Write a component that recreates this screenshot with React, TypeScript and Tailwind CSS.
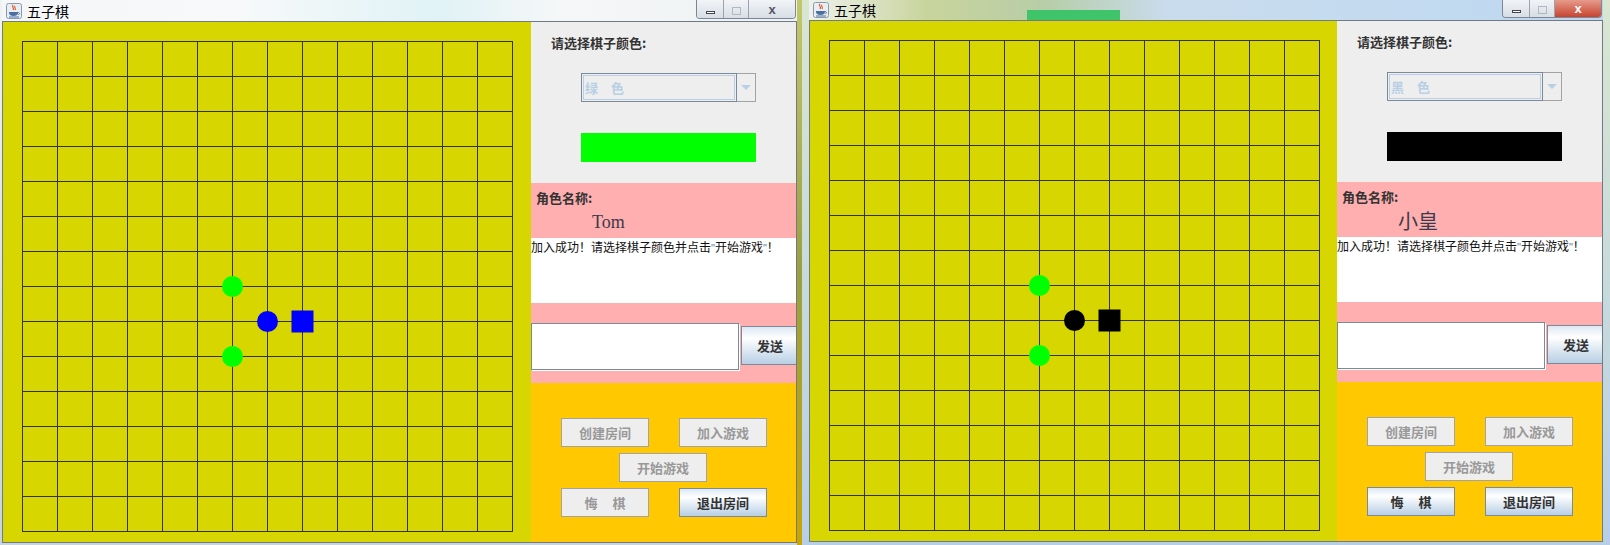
import React from 'react';

const CJK = "font-['Noto_Sans_CJK_SC','Noto_Sans',sans-serif]";

interface Piece {
  c: number;
  r: number;
  shape: 'circle' | 'square';
  color: string;
}

function Board({ width, stone }: { width: number; stone: string }) {
  const pos = Array.from({ length: 15 }, (_, i) => 19.5 + i * 35);
  const pieces: Piece[] = [
    { c: 6, r: 7, shape: 'circle', color: '#00ff00' },
    { c: 6, r: 9, shape: 'circle', color: '#00ff00' },
    { c: 7, r: 8, shape: 'circle', color: stone },
    { c: 8, r: 8, shape: 'square', color: stone },
  ];
  return (
    <div className="h-[520px] bg-[#d8d600] shrink-0" style={{ width }}>
      <svg width={width} height={520} className="block">
        {pos.map((v) => (
          <line key={'h' + v} x1={19} x2={510} y1={v} y2={v} stroke="#333333" strokeWidth={1} />
        ))}
        {pos.map((v) => (
          <line key={'v' + v} x1={v} x2={v} y1={19} y2={510} stroke="#333333" strokeWidth={1} />
        ))}
        {pieces.map((p, i) => {
          const cx = 19.5 + p.c * 35;
          const cy = 19.5 + p.r * 35;
          return p.shape === 'circle' ? (
            <circle key={i} cx={cx} cy={cy} r={10.5} fill={p.color} />
          ) : (
            <rect key={i} x={cx - 11} y={cy - 11} width={22} height={22} fill={p.color} />
          );
        })}
      </svg>
    </div>
  );
}

function Btn({ label, enabled, spaced }: { label: string; enabled: boolean; spaced?: boolean }) {
  const chars = spaced ? label.split('') : [label];
  return (
    <div
      className={`w-[88px] h-[29px] flex items-center justify-center gap-[15px] border text-[13px] font-bold ${CJK} ${
        enabled
          ? 'border-[#7a8a99] bg-[linear-gradient(to_bottom,#dde8f3,#ffffff_30%,#b8cfe5)] text-[#333333]'
          : 'border-[#a3a3a3] bg-[#eeeeee] text-[#999999]'
      }`}
    >
      {chars.map((ch, i) => (
        <span key={i}>{ch}</span>
      ))}
    </div>
  );
}

function Panel({
  colorName,
  swatch,
  name,
  nameClass,
  regret,
}: {
  colorName: string;
  swatch: string;
  name: string;
  nameClass: string;
  regret: boolean;
}) {
  const quote = "font-['Liberation_Sans'] text-[11px] text-[#5a80b0]";
  return (
    <div className={`w-[265px] h-[520px] flex flex-col overflow-hidden shrink-0 ${CJK}`}>
      <div className="h-[161px] bg-[#eeeeee] flex flex-col">
        <div className="pt-[13px] pl-[20px] text-[13px] leading-[16px] font-bold text-[#333333]">请选择棋子颜色:</div>
        <div className="mt-[22px] ml-[50px] w-[175px] h-[29px] flex">
          <div className="flex-1 border border-[#7a8a99] p-[1px]">
            <div className="h-full border border-[#b8cfe5] bg-[#eeeeee] flex items-center pl-[1px] text-[13px] font-bold text-[#b8cfe5]">
              {colorName}
            </div>
          </div>
          <div className="w-[19px] border border-l-0 border-[#a3a3a3] bg-[#eeeeee] flex items-center justify-center">
            <svg width="10" height="6" viewBox="0 0 10 6">
              <path d="M0 0h10L5 5z" fill="#b8cfe5" />
            </svg>
          </div>
        </div>
        <div className="mt-[31px] ml-[50px] w-[175px] h-[29px]" style={{ background: swatch }} />
      </div>
      <div className="h-[55px] bg-[#ffafaf] flex flex-col">
        <div className="pt-[7px] pl-[5px] text-[13px] leading-[16px] font-bold text-[#333333]">角色名称:</div>
        <div className={`mt-[4px] pl-[61px] leading-[24px] text-[#3a3a4a] ${nameClass}`}>{name}</div>
      </div>
      <div className="h-[65px] bg-white pt-[1px] text-[12px] leading-[16px] text-[#111111] whitespace-nowrap">
        加入成功！请选择棋子颜色并点击<span className={quote}>"</span>开始游戏<span className={quote}>"</span>！
      </div>
      <div className="h-[80px] bg-[#ffafaf] pt-[20px] flex items-start">
        <div className="w-[208px] h-[47px] border border-[#7a8a99] bg-white shadow-[1px_1px_0_#ffffff] shrink-0" />
        <div className="ml-[2px] mt-[3px] w-[58px] h-[39px] shrink-0 border border-[#7a8a99] bg-[linear-gradient(to_bottom,#dde8f3,#ffffff_30%,#b8cfe5)] flex items-center justify-center text-[13px] font-bold text-[#333333]">
          发送
        </div>
      </div>
      <div className="flex-1 bg-[#ffc800] pt-[35px] flex flex-col gap-[6px]">
        <div className="flex pl-[30px] gap-[30px]">
          <Btn label="创建房间" enabled={false} />
          <Btn label="加入游戏" enabled={false} />
        </div>
        <div className="flex pl-[88px]">
          <Btn label="开始游戏" enabled={false} />
        </div>
        <div className="flex pl-[30px] gap-[30px]">
          <Btn label="悔棋" enabled={regret} spaced />
          <Btn label="退出房间" enabled />
        </div>
      </div>
    </div>
  );
}

function JavaIcon() {
  return (
    <svg width="16" height="16" viewBox="0 0 16 16">
      <rect x="0.5" y="0.5" width="15" height="15" rx="2" fill="#e8eef4" stroke="#8a9aaa" />
      <path d="M7 2c-2 2 2 3 0 5M9 3c-1.5 1.5 1.5 2 0 4" stroke="#e0562a" strokeWidth="1.2" fill="none" />
      <path d="M3 9h9v1c0 2-2 3-4.5 3S3 12 3 10z" fill="#4a6fa0" />
      <path d="M12 9.5c2 0 2 2 0 2" stroke="#4a6fa0" fill="none" />
      <path d="M3 14h10" stroke="#4a6fa0" />
    </svg>
  );
}

function WinButtons({ active }: { active: boolean }) {
  return (
    <div className="flex h-[19px] -mt-[6px] rounded-b-[4px] border border-t-0 border-[#7d8794] overflow-hidden">
      <div className="w-[27px] bg-[linear-gradient(to_bottom,#f2f4f7,#d8dee6)] border-r border-[#9aa4b0] flex items-end justify-center pb-[4px]">
        <div className="w-[9px] h-[3px] border border-[#445] bg-white" />
      </div>
      <div className="w-[25px] bg-[linear-gradient(to_bottom,#f2f4f7,#d8dee6)] border-r border-[#9aa4b0] flex items-end justify-center pb-[3px]">
        <div className="w-[9px] h-[8px] border border-[#b0b8c2]" />
      </div>
      <div
        className={`w-[46px] flex items-end justify-center pb-[2px] text-[13px] font-bold leading-none ${
          active ? 'bg-[linear-gradient(to_bottom,#e8a090,#c7432f)] text-white' : 'bg-[linear-gradient(to_bottom,#f2f4f7,#d8dee6)] text-[#556]'
        } font-['Liberation_Sans']`}
      >
        x
      </div>
    </div>
  );
}

function GameWindow({
  titleBg,
  glow,
  active,
  boardWidth,
  stone,
  panel,
}: {
  titleBg: string;
  glow?: string;
  active: boolean;
  boardWidth: number;
  stone: string;
  panel: React.ReactNode;
}) {
  return (
    <div className="flex flex-col">
      <div className={titleBg}>
        <div className={`h-[21px] flex items-start justify-between bg-no-repeat ${glow ?? ''}`}>
          <div className="flex items-center gap-[5px] pl-[4px] pt-[3px]">
            <JavaIcon />
            <span className={`text-[14px] leading-[16px] text-black ${CJK}`}>五子棋</span>
          </div>
          <div className="pr-[1px] pt-[6px]">
            <WinButtons active={active} />
          </div>
        </div>
      </div>
      <div className="flex border border-[#6f7a86]">
        <Board width={boardWidth} stone={stone} />
        {panel}
      </div>
    </div>
  );
}

export default function App() {
  return (
    <div className="w-[1610px] h-[545px] overflow-hidden flex bg-[#b9d3ea]">
      <div className="pl-[2px] bg-[linear-gradient(to_bottom,#f0f3f6,#c8d4de)]">
        <GameWindow
          titleBg="bg-[linear-gradient(to_right,#f4f6f8,#f7f9fa_30%,#e0f2f6_55%,#f5f7f8_70%,#eef1f3)]"
          active={false}
          boardWidth={528}
          stone="#0000ff"
          panel={<Panel colorName="绿　色" swatch="#00ff00" name="Tom" nameClass="font-['Liberation_Serif'] text-[18px]" regret={false} />}
        />
      </div>
      <div className="w-[5px] bg-[linear-gradient(to_bottom,#c2c86a,#9aa040,#c9a600)]" />
      <div className="pl-[7px] pr-[7px] bg-[linear-gradient(to_bottom,#d9e6d0,#b7cfe6)]">
        <div className="-mt-[1px]">
          <GameWindow
            titleBg="bg-[linear-gradient(to_right,#eef1ec,#c8d49c_15%,#b7cda8_30%,#c9dced_45%,#c2daf0_80%,#bcd6ef)]"
            glow="bg-[linear-gradient(to_bottom,#3fc46c,#3fc46c)] bg-[length:93px_11px] bg-[position:218px_11px]"
            active
            boardWidth={527}
            stone="#000000"
            panel={<Panel colorName="黑　色" swatch="#000000" name="小皇" nameClass="text-[20px]" regret />}
          />
        </div>
      </div>
    </div>
  );
}
